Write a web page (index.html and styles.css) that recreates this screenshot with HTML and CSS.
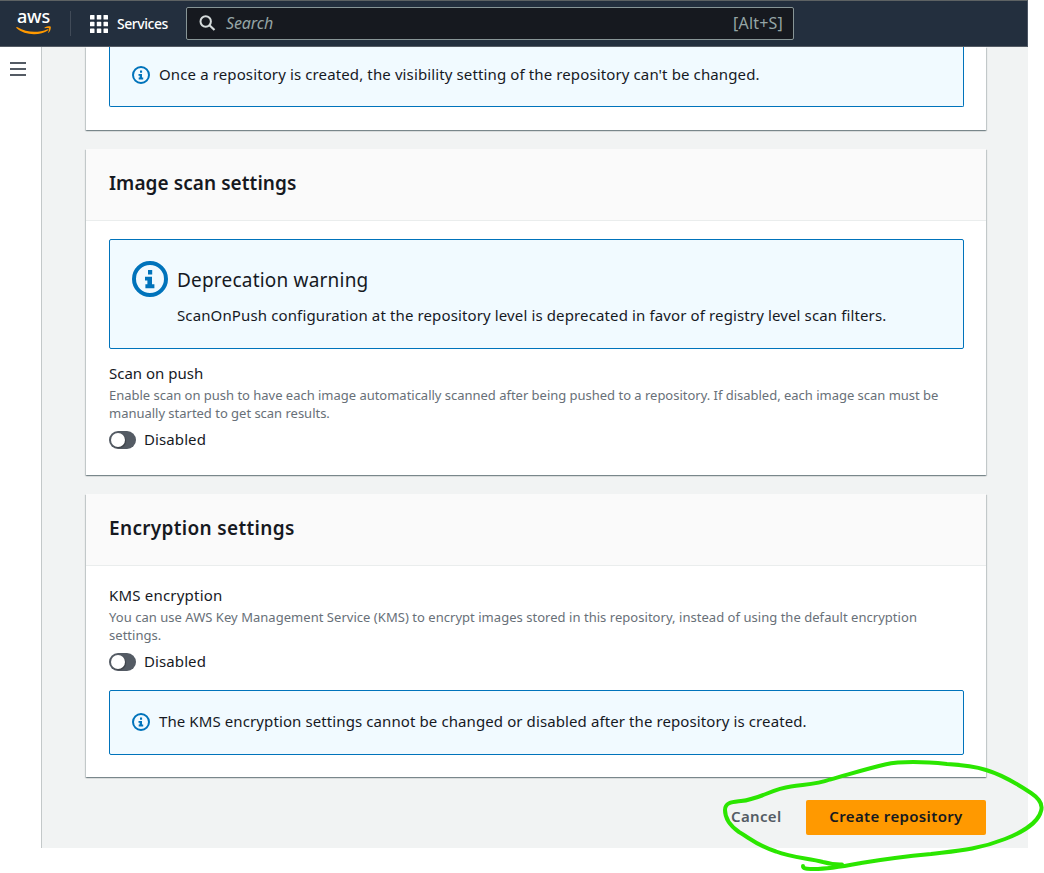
FILE: index.html
```html
<!DOCTYPE html>
<html lang="en">
<head>
<meta charset="utf-8">
<title>Create repository</title>
<link rel="stylesheet" href="styles.css">
</head>
<body>
<svg class="defs" width="0" height="0">
  <symbol id="info" viewBox="0 0 18 18">
    <circle cx="9" cy="9" r="8" fill="none" stroke="#0073bb" stroke-width="2"/>
    <path d="M8 4.500h2.100v2.200H8zM6.500 7.900H10v3.700h1.200v2H6.700v-2h1V9.800H6.500z" fill="#0073bb"/>
  </symbol>
</svg>
<div class="console">
  <header class="topbar">
    <div class="logo">
      <span class="logo-text">aws</span>
      <svg class="smile" width="36" height="10" viewBox="0 0 36 10">
        <path d="M.3 1.2C.6.8 1 .9 1.5 1.2 11 6.800 22 7.100 31.500 3.200c.9-.3 1.400.4.7 1C24 10 8.500 9.600.4 2z" fill="#f90"/>
        <path d="M28.600 1.500C30.500.3 34.200.100 34.700.700c.5.8-.3 4.500-2 6-.4.300-.7.100-.5-.3.500-1.200 1.200-3.300.8-3.900-.4-.6-2.700-.4-4-.2-.5 0-.6-.4-.4-.8z" fill="#f90"/>
      </svg>
    </div>
    <div class="divider"></div>
    <svg class="grid-icon" width="18" height="18" viewBox="0 0 18 18" fill="#fff">
      <rect width="4.500" height="4.500" rx=".6"/><rect x="6.800" width="4.500" height="4.500" rx=".6"/><rect x="13.500" width="4.500" height="4.500" rx=".6"/>
      <rect y="6.800" width="4.500" height="4.500" rx=".6"/><rect x="6.800" y="6.800" width="4.500" height="4.500" rx=".6"/><rect x="13.500" y="6.800" width="4.500" height="4.500" rx=".6"/>
      <rect y="13.500" width="4.500" height="4.500" rx=".6"/><rect x="6.800" y="13.500" width="4.500" height="4.500" rx=".6"/><rect x="13.500" y="13.500" width="4.500" height="4.500" rx=".6"/>
    </svg>
    <span class="services">Services</span>
    <div class="search">
      <svg width="17" height="17" viewBox="0 0 17 17" fill="none" stroke="#d5dbdb" stroke-width="2">
        <circle cx="6.700" cy="6.500" r="5.200"/><path d="M10.500 10.300l5 4.700" stroke-width="2.200"/>
      </svg>
      <span class="placeholder">Search</span>
      <span class="shortcut">[Alt+S]</span>
    </div>
  </header>
  <div class="body">
    <nav class="rail">
      <svg width="16" height="15" viewBox="0 0 16 15" fill="#545b64"><path d="M0 0h16v2H0zM0 6h16v2H0zM0 12h16v2H0z"/></svg>
    </nav>
    <main class="content">
      <section class="card card-visibility">
        <div class="alert alert-cut">
          <svg width="18" height="18"><use href="#info"/></svg>
          <span class="text t-once">Once a repository is created, the visibility setting of the repository can't be changed.</span>
        </div>
      </section>
      <section class="card card-scan">
        <h2>Image scan settings</h2>
        <div class="card-body">
          <div class="alert alert-large">
            <svg width="36" height="36"><use href="#info"/></svg>
            <div>
              <div class="alert-title">Deprecation warning</div>
              <div class="text t-onpush">ScanOnPush configuration at the repository level is deprecated in favor of registry level scan filters.</div>
            </div>
          </div>
          <div class="field">
            <div class="label">Scan on push</div>
            <div class="hint">Enable scan on push to have each image automatically scanned after being pushed to a repository. If disabled, each image scan must be<br>manually started to get scan results.</div>
            <div class="toggle-row"><span class="toggle"></span><span class="text">Disabled</span></div>
          </div>
        </div>
      </section>
      <section class="card card-encryption">
        <h2>Encryption settings</h2>
        <div class="card-body">
          <div class="field">
            <div class="label">KMS encryption</div>
            <div class="hint">You can use AWS Key Management Service (KMS) to encrypt images stored in this repository, instead of using the default encryption<br>settings.</div>
            <div class="toggle-row"><span class="toggle"></span><span class="text">Disabled</span></div>
          </div>
          <div class="alert alert-small">
            <svg width="18" height="18"><use href="#info"/></svg>
            <span class="text t-kms">The KMS encryption settings cannot be changed or disabled after the repository is created.</span>
          </div>
        </div>
      </section>
      <div class="actions">
        <span class="cancel">Cancel</span>
        <span class="create">Create repository</span>
      </div>
    </main>
  </div>
</div>
<svg class="marker" width="1044" height="873" viewBox="0 0 1044 873">
  <path d="M842 864.500C835 865 829 863.500 823 862 809 858 793 858 776 851.500 758 846 751 839 739 832 729 825 725 818 725 810 725 802 733 802 741 801 761 799 771 789 791 786.500 810 784 818 784 830 779.500 850 774 866 769 885 764.500 902 761 927 762 947 764 965 765 974 766 986 770 1003 775 1019 785 1031 793 1040 799 1043 805 1041 811 1038 824 1018 834 1005 839 977 850 956 851 931 854 899 857 879 860 861 863 845 866 830 869 814 869 807 869 803 869 803 866"/>
</svg>
</body>
</html>
```
FILE: styles.css
```css
* { box-sizing: border-box; }
body { margin: 0; background: #fff; color: #16191f; font-family: "Noto Sans", "Open Sans", sans-serif; font-size: 15px; overflow: hidden; }
svg { display: block; flex: none; }
.defs { position: absolute; }
.console { width: 1028px; height: 848px; display: flex; flex-direction: column; }
.topbar { flex: none; height: 47px; display: flex; align-items: center; background: #232f3e; border-top: 1px solid #5d6263; border-bottom: 1px solid #545b64; border-right: 1px solid #4b5563; color: #fff; }
.logo { width: 36px; height: 26px; margin-left: 16px; }
.logo-text { display: block; height: 15px; line-height: 11px; font-size: 18px; font-weight: 500; letter-spacing: -.2px; padding-left: 1px; }
.divider { width: 1px; height: 25px; margin-left: 18px; background: #414b58; }
.grid-icon { margin-left: 19px; }
.services { width: 77px; padding: 0 0 1px 9px; font-size: 14px; font-weight: 500; letter-spacing: -.45px; white-space: nowrap; }
.search { width: 608px; height: 33px; margin-left: 1px; padding: 0 10px 0 12px; display: flex; align-items: center; background: #16191f; border: 1px solid #879596; border-radius: 2px; color: #95a5a6; }
.placeholder { margin-left: 10px; padding-bottom: 2px; flex: 1; font-style: italic; font-size: 16px; letter-spacing: -.1px; }
.shortcut { font-size: 16px; letter-spacing: .2px; padding-bottom: 1px; }
.body { flex: 1; min-height: 0; display: flex; }
.rail { width: 42px; flex: none; padding: 15px 0 0 10px; border-right: 1px solid #c3c8c9; }
.content { flex: 1; padding: 0 42px 0 44px; background: #f1f3f3; overflow: hidden; }
.card { background: #fff; box-shadow: 0 1px 1px 0 rgba(0,28,36,.3), 1px 1px 1px 0 rgba(0,28,36,.15), -1px 1px 1px 0 rgba(0,28,36,.15); }
.card-visibility { height: 83px; padding: 0 22px 0 23px; margin-bottom: 19px; }
.card-scan { height: 326px; margin-bottom: 19px; }
.card-encryption { height: 283px; }
h2 { margin: 0; height: 72px; padding: 0 23px; line-height: 68px; background: #fafafa; border-bottom: 1px solid #eaeded; font-size: 19px; font-weight: 600; letter-spacing: .07px; }
.card-encryption h2 { letter-spacing: .33px; }
.card-body { padding: 18px 22px 0 23px; }
.alert { display: flex; border: 1px solid #0073bb; border-radius: 2px; background: #f1faff; padding-left: 22px; }
.alert svg { margin-right: 9px; }
.alert-cut { height: 60px; border-top: 0; border-radius: 0 0 2px 2px; padding-top: 19px; }
.alert-cut .text, .alert-small .text { line-height: 16px; }
.alert-small { height: 65px; padding-top: 22px; margin-top: 19px; }
.alert-large { height: 110px; padding-top: 21px; }
.text, .label { font-size: 15px; line-height: 18px; white-space: nowrap; }
.t-once { letter-spacing: .12px; }
.t-onpush { letter-spacing: .125px; }
.t-kms { letter-spacing: .1px; }
.alert-title { font-size: 19px; line-height: 24px; margin: 7px 0 14px; letter-spacing: .2px; }
.field { padding-top: 15px; }
.hint { margin-top: 4px; color: #687078; font-size: 13px; line-height: 18px; letter-spacing: -.018px; white-space: nowrap; }
.card-encryption .field { padding-top: 2px; }
.card-encryption .label { letter-spacing: .2px; }
.card-encryption .hint { letter-spacing: .035px; }
.toggle-row { display: flex; align-items: center; gap: 8px; height: 18px; margin-top: 9px; }
.toggle-row .text { padding-bottom: 2px; letter-spacing: .1px; }
.toggle { width: 27px; height: 18px; border-radius: 9px; background: #545b64; padding: 2px; }
.toggle::before { content: ""; display: block; width: 14px; height: 14px; border-radius: 50%; background: #fff; box-shadow: 1px 1px 1px rgba(0,0,0,.3); }
.actions { display: flex; justify-content: flex-end; align-items: center; height: 35px; margin-top: 23px; font-size: 15px; font-weight: 600; letter-spacing: .35px; }
.cancel { width: 75px; padding-bottom: 3px; color: #545b64; }
.create { width: 180px; height: 35px; line-height: 32px; text-align: center; background: #f90; border-radius: 2px; }
.marker { position: absolute; left: 0; top: 0; pointer-events: none; fill: none; stroke: #2be600; stroke-width: 4; stroke-linecap: round; stroke-linejoin: round; }
```
